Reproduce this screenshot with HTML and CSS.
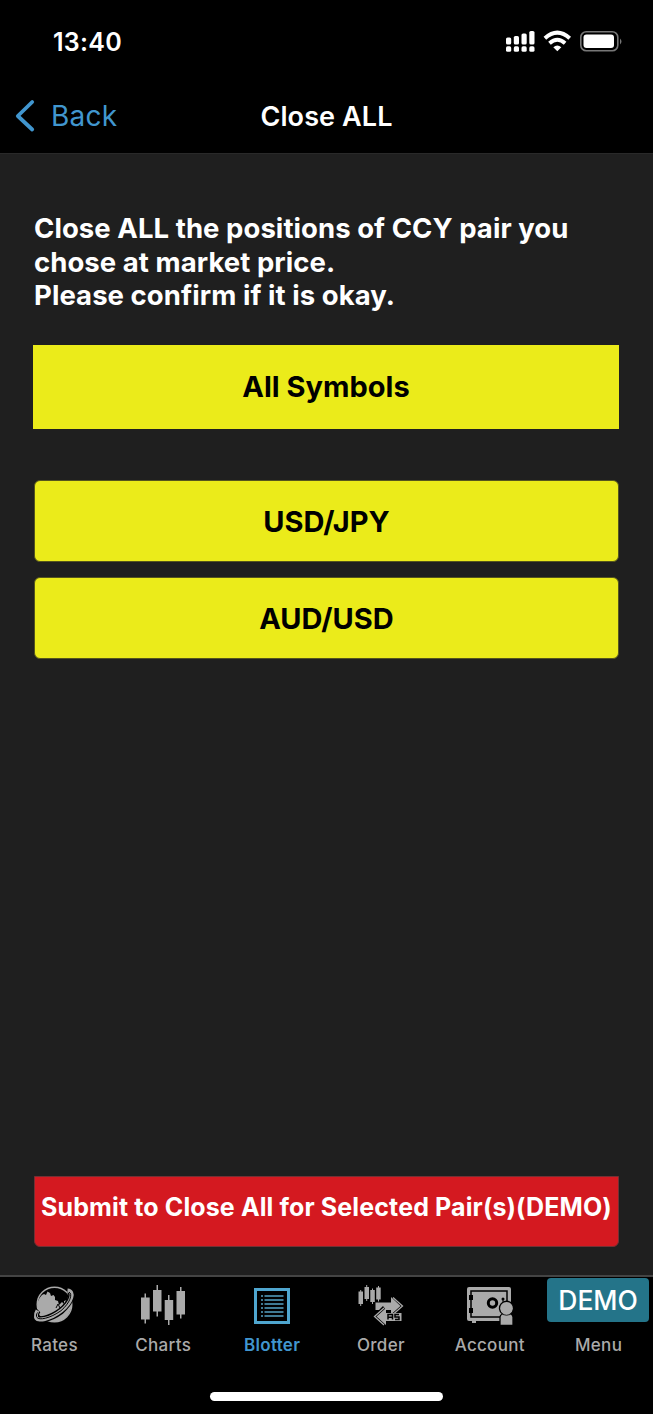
FILE: index.html
```html
<!DOCTYPE html>
<html lang="en">
<head>
<meta charset="utf-8">
<title>Close ALL</title>
<link rel="stylesheet" href="styles.css">
</head>
<body>
<div class="screen">
  <header class="status">
    <span class="time">13:40</span>
    <svg class="status-icons" width="120" height="26" viewBox="0 0 120 26">
      <g fill="#fff">
        <rect x="0" y="7.5" width="5.2" height="7" rx="1.6"/><rect x="7.8" y="6" width="5.2" height="8.5" rx="1.6"/><rect x="15.5" y="3.5" width="5.2" height="11" rx="1.6"/><rect x="23.300" y="1" width="5.2" height="13.5" rx="1.6"/>
        <rect x="0" y="16.300" width="5.2" height="5.500" rx="1.6"/><rect x="7.8" y="16.300" width="5.2" height="5.500" rx="1.6"/><rect x="15.5" y="16.300" width="5.2" height="5.500" rx="1.6"/><rect x="23.300" y="16.300" width="5.2" height="5.500" rx="1.6"/>
        <path d="M51.300 21.300L47.300 17.300Q51.300 13.900 55.300 17.300Z"/>
        <rect x="77.500" y="4.500" width="30.500" height="13.500" rx="3"/>
        <path d="M114 8.500Q117 11.500 114 14.500Z" fill="#777"/>
      </g>
      <g fill="none" stroke="#fff" stroke-width="3.900"><path d="M38.900 8.300Q51.300-3 63.700 8.300"/><path d="M43.500 13.300Q51.300 6.300 59.100 13.300"/></g>
      <rect x="74.800" y="1.800" width="37" height="19" rx="5.500" fill="none" stroke="#777" stroke-width="1.600"/>
    </svg>
  </header>
  <nav class="nav">
    <a class="back"><svg width="20" height="34" viewBox="0 0 20 34"><path d="M17.200 3L2.800 17L17.200 30.500" fill="none" stroke="#4196cf" stroke-width="3.800" stroke-linecap="round" stroke-linejoin="round"/></svg><span class="back-label">Back</span></a>
    <h1 class="title">Close ALL</h1>
  </nav>
  <main class="content">
    <p class="message">Close ALL the positions of CCY pair you<br>chose at market price.<br>Please confirm if it is okay.</p>
    <button class="choice all">All Symbols</button>
    <button class="choice pair">USD/JPY</button>
    <button class="choice pair">AUD/USD</button>
    <button class="submit"><span class="submit-label">Submit to Close All for Selected Pair(s)(DEMO)</span></button>
  </main>
  <footer class="tabs">
    <div class="tab"><svg width="50" height="50" viewBox="0 0 50 50">
      <circle cx="25.500" cy="24.500" r="17.300" fill="none" stroke="#aaa" stroke-width="1.400"/>
      <path d="M8.500 27Q8 20 13 15L15 14L17 15L18.500 11.500L21 13L22 16L24.500 15L26 17V20L29 21L30 25L33 22L35 24V21L38 20L39 17L42 18.500Q43 23 42 29Q38 40 28 42Q18 42 10 35Z" fill="#aaa"/>
      <path d="M27 28L29 24L31 28L33 27" fill="none" stroke="#000" stroke-width="1"/>
      <g fill="none"><path d="M39 11C46 12 42 22 32 31C21 39 8 42 7 37C6.500 34 8 31 9 30" stroke="#000" stroke-width="6.500"/><path d="M38.500 10.500C46 11 43 22 32.500 30.500C21 39.500 8 42 7 37C6.500 34 7.500 32 8.500 30.500" stroke="#aaa" stroke-width="4"/><path d="M40 12C44 14 41 23 32 30.700C21 38.500 10 40.500 8 37.500C7 36 7.500 34 8.500 32.500" stroke="#000" stroke-width="1"/></g>
    </svg><span class="tab-label">Rates</span></div>
    <div class="tab"><svg width="50" height="50" viewBox="0 0 50 50"><g fill="#aaa"><rect x="3" y="17.500" width="8.700" height="22"/><rect x="6.500" y="13.500" width="1.500" height="30"/><rect x="15" y="10" width="8.500" height="21.500"/><rect x="18.500" y="5" width="1.500" height="31.500"/><rect x="26.700" y="20" width="8.500" height="20"/><rect x="30" y="15" width="1.500" height="30"/><rect x="38.500" y="11" width="8.500" height="23.500"/><rect x="42" y="7" width="1.500" height="31.500"/></g></svg><span class="tab-label">Charts</span></div>
    <div class="tab active"><svg width="50" height="50" viewBox="0 0 50 50"><rect x="8.500" y="9.500" width="33" height="33" fill="none" stroke="#4fa6cf" stroke-width="3"/><g stroke="#55a2c4" stroke-width="1.600"><path d="M14 16h2m1.500 0h19M14 20h2m1.500 0h19M14 24h2m1.500 0h19M14 28h2m1.500 0h19M14 32h2m1.500 0h19M14 36h2m1.500 0h19"/></g></svg><span class="tab-label">Blotter</span></div>
    <div class="tab"><svg width="50" height="50" viewBox="0 0 50 50"><g fill="#aaa"><path d="M2.500 11.500h4.500v12.500h-4.500zM8.500 7h4.500v12h-4.500zM14.300 10h4.500v12h-4.500zM20.200 7.500h4.500v12h-4.500z"/><path d="M4.200 10h1v16h-1zM10.200 5h1v16h-1zM16 8.500h1v15.500h-1zM22 6h1v15.500h-1z"/>
      <path d="M19.500 22.500H35V17L44.500 26L35 34.500V30H30L27 26L23 30H19.500Z"/><path d="M37 17.500L46.500 26L37 34.500" fill="none" stroke="#aaa" stroke-width="1.300"/>
      <path d="M45.500 33H30V28L20.500 36.500L30 45V41H45.500Z"/><path d="M28 28L18.500 36.500L28 45" fill="none" stroke="#aaa" stroke-width="1.300"/></g><path d="M32 39.500V34.500H36.500V39.500M32 37.200H36.500M43 34.500H39V37H43V39.500H39" fill="none" stroke="#000" stroke-width="1.500"/></svg><span class="tab-label">Order</span></div>
    <div class="tab"><svg width="50" height="50" viewBox="0 0 50 50"><path d="M4 7h40q2 0 2 2v30q0 2-2 2H11v2H7v-2H4q-2 0-2-2V9q0-2 2-2Z" fill="#aaa"/><rect x="6" y="11" width="36" height="26" fill="none" stroke="#000" stroke-width="1.500"/><path d="M4 15h4v5H4zM4 28h4v5H4z" fill="#000"/><circle cx="27.500" cy="23" r="4.200" fill="none" stroke="#000" stroke-width="3"/><circle cx="38" cy="19" r="1.500"/><path d="M38 18v7" stroke="#000"/><path d="M35 45.500V37Q35 35 37.500 34A7 7 0 1 1 45.500 34Q48 35 48 37V45.500Z" fill="#aaa" stroke="#000" stroke-width="1.300"/><path d="M38 34.500q3.500 1.500 7 0" fill="none" stroke="#000" stroke-width=".8"/></svg><span class="tab-label">Account</span></div>
    <div class="tab menu"><span class="badge">DEMO</span><span class="tab-label">Menu</span></div>
    <i class="home"></i>
  </footer>
</div>
</body>
</html>
```
FILE: styles.css
```css
* { box-sizing: border-box; }
body { margin: 0; background: #000; }
.screen { width: 653px; height: 1414px; display: flex; flex-direction: column; background: #000; color: #fff; font-family: Inter, "Liberation Sans", sans-serif; }
.status { height: 80px; padding: 28px 27px 0 53px; display: flex; justify-content: space-between; }
.time { font-size: 25px; line-height: 28px; font-weight: 600; letter-spacing: 0.3px; }
.status-icons { margin-top: 2px; }
.nav { height: 73px; display: grid; grid-template-columns: 1fr auto 1fr; align-items: center; padding: 0 15px 1px; }
.back { display: flex; align-items: center; gap: 16px; color: #4196cf; font-size: 28px; letter-spacing: 0.2px; }
.back svg { margin-top: -1px; }
.back-label { margin-top: -1px; }
.title { margin: 0; font-size: 27px; font-weight: 600; letter-spacing: 0.1px; }
.content { height: 1122px; padding: 58px 34px 28px; background: #1f1f1f; border-top: 1px solid #292929; display: flex; flex-direction: column; }
.message { margin: 0; font-size: 27.5px; line-height: 33.7px; font-weight: 700; letter-spacing: 0.06px; white-space: nowrap; height: 133px; }
button { font-family: inherit; padding: 0; border: 0; }
.choice { background: #ebeb1a; color: #000; font-size: 29px; font-weight: 700; flex: none; }
.all { height: 84px; margin: 0 0 51px -1px; padding-bottom: 1px; }
.pair { height: 82px; border: 1px solid #55551d; border-radius: 6px; margin-bottom: 15px; }
.submit { height: 71px; margin-top: auto; background: #d41920; color: #fff; border: 1px solid #743034; border-radius: 0 0 6px 6px; font-size: 25px; font-weight: 700; letter-spacing: 0.12px; white-space: nowrap; padding-bottom: 10px; }
.tabs { position: relative; height: 139px; border-top: 2px solid #444; display: grid; grid-template-columns: repeat(6, 1fr); }
.tab { display: flex; flex-direction: column; align-items: center; color: #aaa; font-size: 17px; font-weight: 500; letter-spacing: 0.3px; padding-top: 3px; height: 90px; }
.tab svg { flex: none; }
.tab-label { margin-top: 5px; line-height: 20px; }
.active { color: #4196cf; font-weight: 600; }
.badge { width: 102px; height: 44px; margin: -2px 0 8px -1px; border-radius: 4px; background: #247489; color: #fff; font-size: 26.5px; letter-spacing: 0; line-height: 44px; text-align: center; }
.home { position: absolute; left: 210px; bottom: 13px; width: 233px; height: 9px; border-radius: 5px; background: #fff; }
```
